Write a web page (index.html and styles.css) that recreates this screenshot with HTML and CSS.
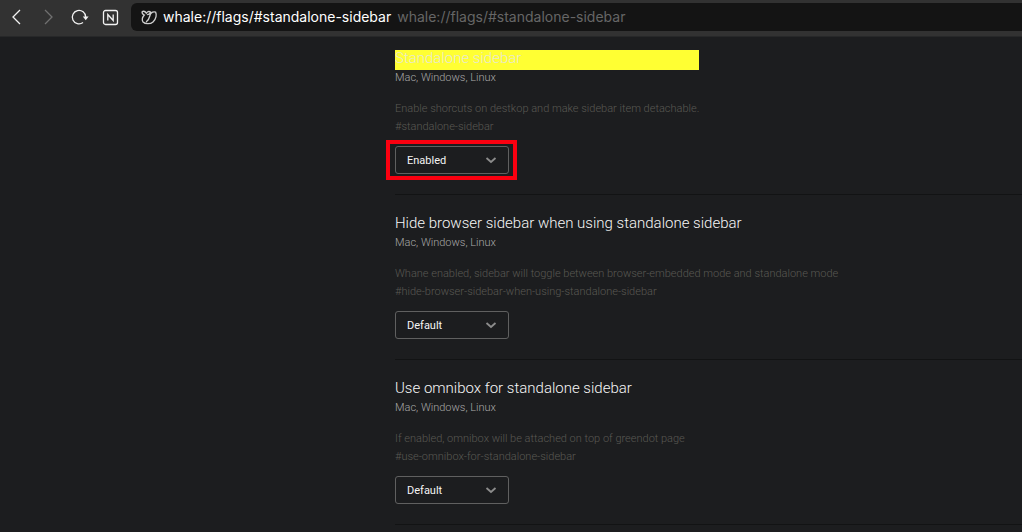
FILE: index.html
```html
<!DOCTYPE html>
<html lang="en">
<head>
<meta charset="utf-8">
<title>Flags</title>
<link rel="stylesheet" href="styles.css">
</head>
<body>
<header class="toolbar">
  <nav class="nav" aria-label="Browser navigation">
    <button class="nav-button" type="button" aria-label="Back"><svg class="icon" viewBox="0 0 16 16"><path d="M11 1 4 8l7 7"/></svg></button>
    <button class="nav-button nav-button-dim" type="button" aria-label="Forward"><svg class="icon" viewBox="0 0 16 16"><path d="m5 1 7 7-7 7"/></svg></button>
    <button class="nav-button" type="button" aria-label="Reload"><svg class="icon" viewBox="0 0 16 16"><path d="M12 13.500A6.700 6.700 0 1 1 14.700 8"/><path class="solid" d="M11.800 7.500h5.800L14.700 11.300z"/></svg></button>
    <button class="nav-button" type="button" aria-label="Naver"><svg class="icon" viewBox="0 0 16 16"><rect x="1.500" y="1.500" width="14" height="14" rx="2"/><path d="M5.800 11.500v-6l5.400 6v-6"/></svg></button>
  </nav>
  <div class="address">
    <svg class="icon whale" viewBox="0 0 16 16"><path d="M1 2.500c2-.7 3.500.1 4.300 1.700C6.200 2.500 8 2 9.600 3 9 4.700 7.800 5.600 6.100 5.700M1 2.500c0 2 .7 3 2.300 3.500C1.300 8.300.8 11 2 13c2.300 2.300 7.500 2.200 10-.1 3.500-3 3.700-7.500 2.600-9.800-2.800-.6-5.100 1-5.800 3.900-.5 2.500-1.800 4.500-3.700 6.100"/></svg>
    <span class="url">whale://flags/#standalone-sidebar</span>
    <span class="url-hint">whale://flags/#standalone-sidebar</span>
  </div>
</header>
<main class="flags">
  <section class="flag">
    <div class="flag-text">
      <h2 class="title title-found">Standalone sidebar</h2>
      <p class="platforms">Mac, Windows, Linux</p>
      <p class="description">Enable shorcuts on destkop and make sidebar item detachable.</p>
      <a class="permalink" href="#standalone-sidebar">#standalone-sidebar</a>
    </div>
    <div class="picker picker-marked">
      <select class="select" aria-label="Standalone sidebar"><option>Default</option><option selected>Enabled</option><option>Disabled</option></select>
      <svg class="chevron" viewBox="0 0 12 8"><path d="m1.500 2 4.500 4 4.500-4"/></svg>
    </div>
  </section>
  <section class="flag">
    <div class="flag-text">
      <h2 class="title">Hide browser sidebar when using standalone sidebar</h2>
      <p class="platforms">Mac, Windows, Linux</p>
      <p class="description">Whane enabled, sidebar will toggle between browser-embedded mode and standalone mode</p>
      <a class="permalink" href="#hide-browser-sidebar-when-using-standalone-sidebar">#hide-browser-sidebar-when-using-standalone-sidebar</a>
    </div>
    <div class="picker">
      <select class="select" aria-label="Hide browser sidebar when using standalone sidebar"><option selected>Default</option><option>Enabled</option><option>Disabled</option></select>
      <svg class="chevron" viewBox="0 0 12 8"><path d="m1.500 2 4.500 4 4.500-4"/></svg>
    </div>
  </section>
  <section class="flag">
    <div class="flag-text">
      <h2 class="title">Use omnibox for standalone sidebar</h2>
      <p class="platforms">Mac, Windows, Linux</p>
      <p class="description">If enabled, omnibox will be attached on top of greendot page</p>
      <a class="permalink" href="#use-omnibox-for-standalone-sidebar">#use-omnibox-for-standalone-sidebar</a>
    </div>
    <div class="picker">
      <select class="select" aria-label="Use omnibox for standalone sidebar"><option selected>Default</option><option>Enabled</option><option>Disabled</option></select>
      <svg class="chevron" viewBox="0 0 12 8"><path d="m1.500 2 4.500 4 4.500-4"/></svg>
    </div>
  </section>
</main>
</body>
</html>
```
FILE: styles.css
```css
* { box-sizing: border-box; }
body {
  margin: 0;
  background: #1c1d1f;
  color: #f6f6f6;
  font-family: Roboto, "Noto Sans", sans-serif;
}
h2, p { margin: 0; }
.toolbar {
  display: flex;
  align-items: center;
  gap: 13px;
  padding: 3px 0 5px 9px;
  background: #323232;
  border-bottom: 1px solid #272829;
}
.nav { display: flex; gap: 15px; }
.nav-button {
  display: flex;
  padding: 0;
  border: 0;
  background: none;
  color: #f2f2f2;
}
.nav-button-dim { color: #707070; }
.icon {
  width: 16px;
  height: 16px;
  overflow: visible;
  fill: none;
  stroke: currentColor;
  stroke-width: 1.3;
}
.solid { fill: currentColor; stroke: none; }
.address {
  flex: 1;
  display: flex;
  align-items: center;
  gap: 6px;
  min-width: 0;
  height: 28px;
  padding-left: 10px;
  border-radius: 6px 0 0 6px;
  background: #141414;
  font: 14px/20px Inter, Roboto, sans-serif;
  white-space: nowrap;
}
.whale { flex: none; color: #cfcfcf; }
.url { color: #fff; }
.url-hint { color: #666; }
.flags { padding: 13px 0 0 395px; }
.flag {
  margin-bottom: 20px;
  padding-bottom: 20px;
  border-bottom: 1px solid #121314;
}
.flag-text { width: fit-content; margin-bottom: 10px; font-weight: 300; }
.title {
  padding-bottom: 3px;
  font-size: 15px;
  line-height: 17px;
  font-weight: 300;
}
.title-found { background: #ffff33; color: #e8e8d0; }
.platforms {
  margin-bottom: 15px;
  color: #a8a8a8;
  font-size: 11px;
  line-height: 15px;
}
.description, .permalink {
  display: block;
  color: #5a5953;
  font-size: 11px;
  line-height: 18px;
  text-decoration: none;
}
.picker {
  position: relative;
  display: grid;
  width: 114px;
  align-items: center;
}
.picker-marked::after {
  content: "";
  position: absolute;
  inset: -6px -8px -6px -9px;
  border: 4px solid #fb0010;
  pointer-events: none;
}
.select, .chevron { grid-area: 1 / 1; }
.select {
  appearance: none;
  width: 100%;
  height: 28px;
  padding: 0 28px 0 11px;
  border: 1px solid #606060;
  border-radius: 3px;
  background: transparent;
  color: #f4f4f4;
  font: inherit;
  font-size: 11px;
}
.chevron {
  justify-self: end;
  width: 12px;
  height: 8px;
  margin-right: 12px;
  fill: none;
  stroke: #8c8c8c;
  stroke-width: 1.8;
  pointer-events: none;
}
```
